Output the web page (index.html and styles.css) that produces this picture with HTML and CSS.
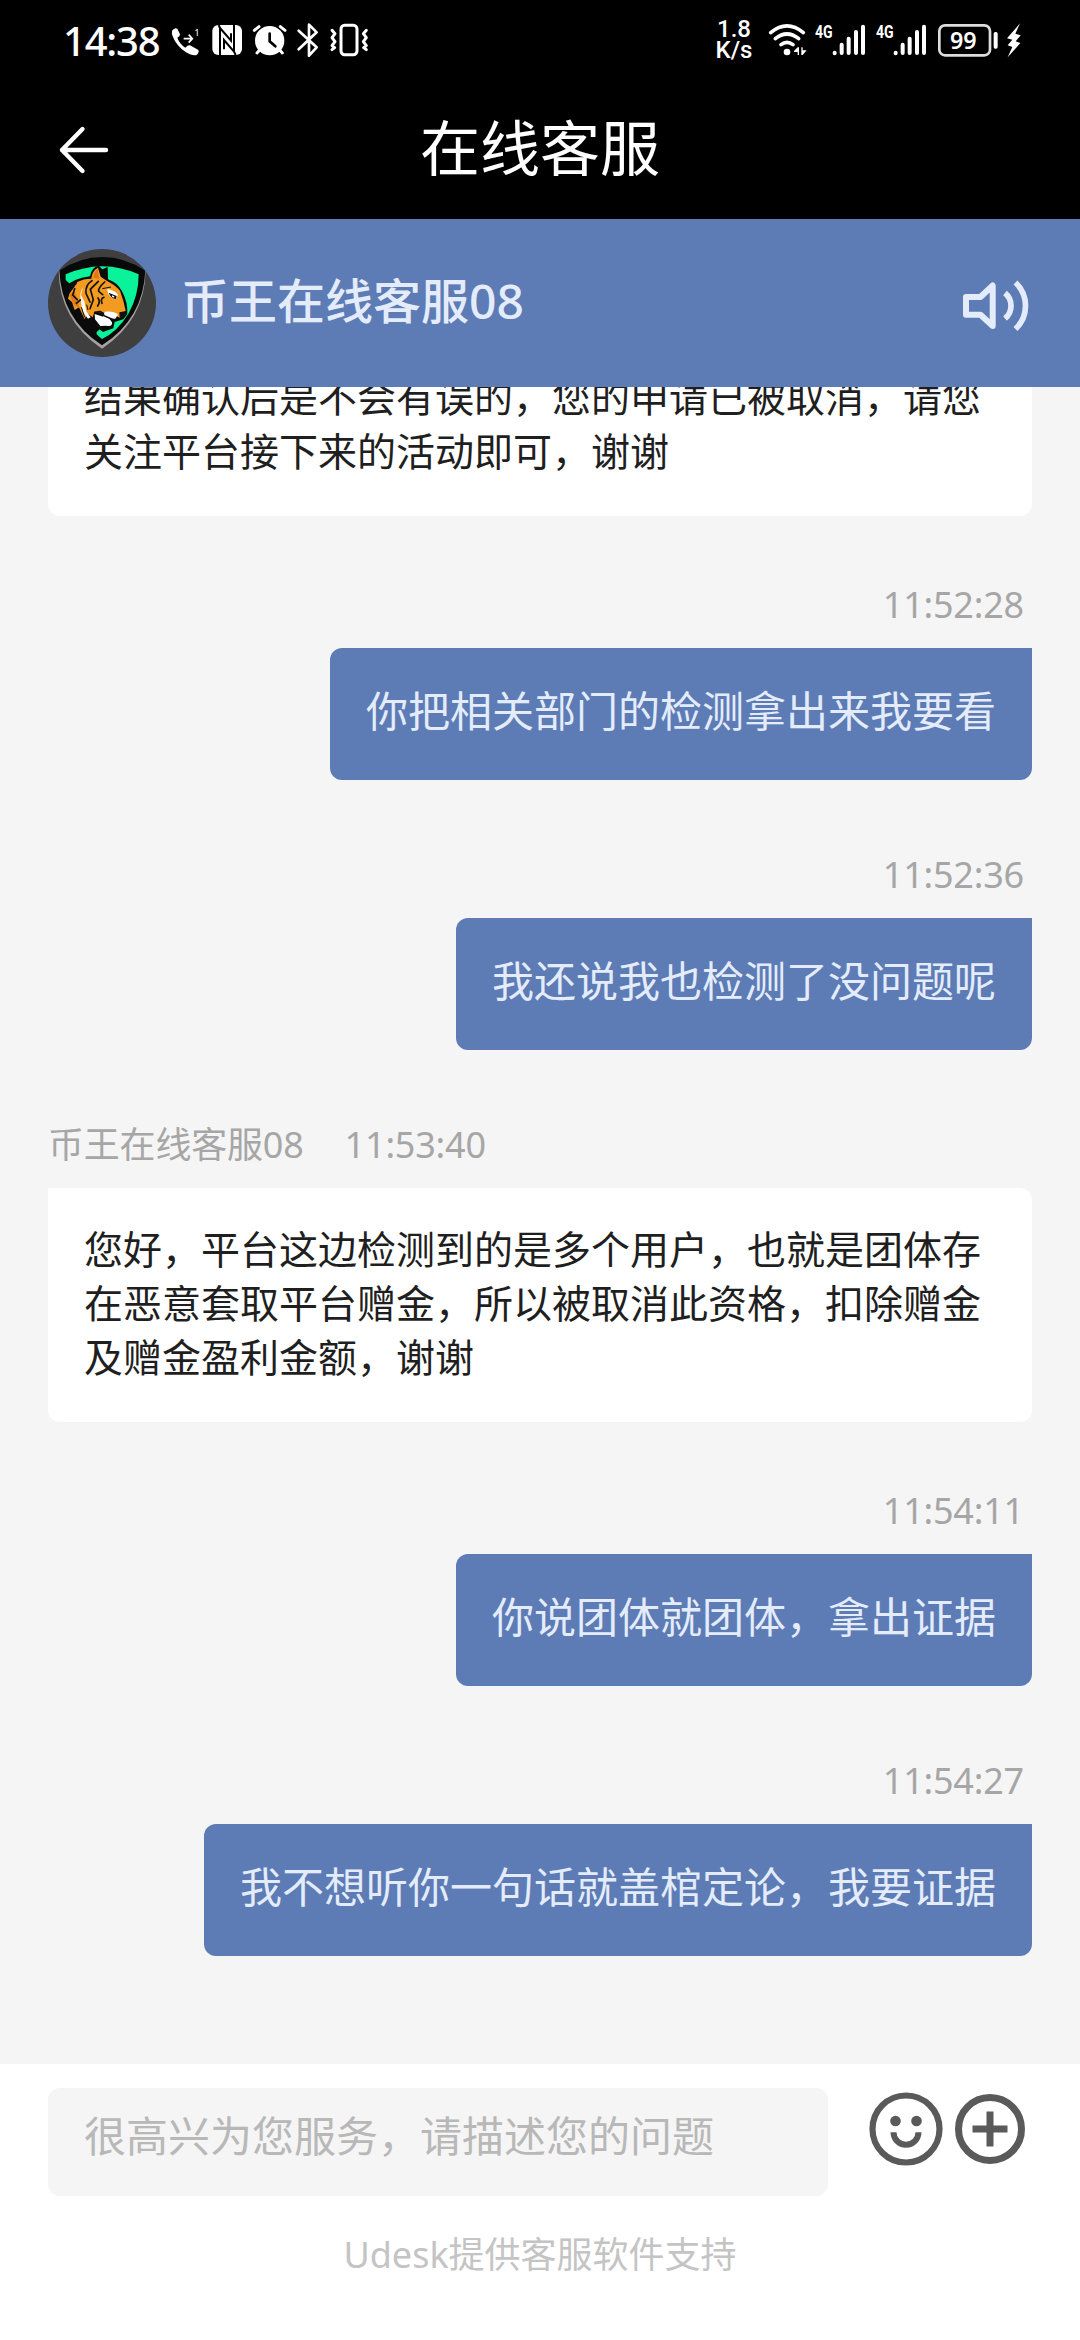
FILE: index.html
```html
<!DOCTYPE html>
<html lang="zh-CN">
<head>
    <meta charset="UTF-8">
    <meta name="viewport" content="width=device-width, initial-scale=1.0">
    <title>在线客服</title>
    <link rel="stylesheet" href="styles.css">
</head>
<body>
    <div class="status-bar">
        <div class="status-left">
            <span class="clock">14:38</span>
            <svg class="icon-call" width="28" height="36" viewBox="393 66 84 108">
                <path fill="#fff" d="M396 92q8-11 16-6l8 17q1 6-8 10q6 18 24 30q8-9 14-7l24 13q6 6-4 16q-12 4-32-8q-28-18-39-46q-5-12-3-19z"/>
                <path fill="none" stroke="#fff" stroke-width="5" d="M431 116h25M446 104l11 12l-11 12"/>
                <text x="463" y="108" font-size="29" fill="#fff">1</text>
            </svg>
            <svg class="icon-nfc" width="30" height="36" viewBox="517 66 90 108">
                <rect x="518" y="75" width="89" height="90" rx="18" fill="#fff"/>
                <path fill="none" stroke="#000" stroke-width="6" d="M541 165V84L574 122V100M583 75V155L553 120V148M541 84l-4-9M583 155l5 10"/>
            </svg>
            <svg class="icon-alarm" width="34" height="36" viewBox="640 66 102 108">
                <circle cx="690" cy="122" r="44" fill="#fff"/>
                <path stroke="#fff" stroke-width="9" stroke-linecap="round" d="M644 91l14-11M736 91l-14-11M662 148l-10 11M718 148l10 11"/>
                <path fill="none" stroke="#000" stroke-width="8" stroke-linecap="round" d="M690 101v23l17 15"/>
            </svg>
            <svg class="icon-bt" width="22" height="36" viewBox="772 66 66 108">
                <path fill="none" stroke="#fff" stroke-width="8" stroke-linejoin="round" stroke-linecap="round" d="M777 92L831 142L808 167V74L831 97L777 148"/>
            </svg>
            <svg class="icon-vib" width="39" height="36" viewBox="870 66 117 108">
                <rect x="903" y="76" width="48" height="88" rx="11" fill="none" stroke="#fff" stroke-width="9"/>
                <path fill="none" stroke="#fff" stroke-width="9" stroke-linejoin="round" stroke-linecap="round" d="M876 91l9 10l-9 12l9 12l-9 12l8 6l-8 6M979 91l-9 10l9 12l-9 12l9 12l-8 6l8 6"/>
            </svg>
        </div>
        <div class="status-right">
            <div class="speed"><span>1.8</span><span>K/s</span></div>
            <svg class="icon-wifi" width="38" height="36" viewBox="237 66 114 108">
                <path fill="none" stroke="#fff" stroke-width="11" stroke-linecap="round" d="M242 98q49-41 98 0M256 116q35-28 70 0M273 134q18-14 36 0"/>
                <circle cx="291" cy="156" r="10" fill="#fff"/>
                <path fill="#fff" d="M312 153l11-11h4v23h-4v-9h-11zM334 142h4v9h12l-12 14h-4z"/>
            </svg>
            <svg class="icon-signal" width="51" height="36" viewBox="373 66 153 108">
                <text x="373" y="114" font-size="54" font-weight="700" fill="#fff" textLength="53" lengthAdjust="spacingAndGlyphs">4G</text>
                <path stroke="#fff" stroke-width="12" stroke-linecap="round" d="M432 158.500v1M453 134v25M474 116v43M496 96v63M517 80v79"/>
            </svg>
            <svg class="icon-signal" width="51" height="36" viewBox="373 66 153 108">
                <text x="373" y="114" font-size="54" font-weight="700" fill="#fff" textLength="53" lengthAdjust="spacingAndGlyphs">4G</text>
                <path stroke="#fff" stroke-width="12" stroke-linecap="round" d="M432 158.500v1M453 134v25M474 116v43M496 96v63M517 80v79"/>
            </svg>
            <svg class="icon-battery" width="60" height="36" viewBox="742 66 180 108">
                <rect x="746" y="76" width="152" height="90" rx="17" fill="none" stroke="#ddd" stroke-width="8"/>
                <rect x="909" y="96" width="12" height="50" rx="5" fill="#fff"/>
                <text x="778" y="147" font-size="68" font-weight="600" fill="#fff" textLength="80" lengthAdjust="spacingAndGlyphs">99</text>
            </svg>
            <svg class="icon-bolt" width="16" height="36" viewBox="947 66 48 108">
                <path fill="#fff" d="M989 70L950 115l16 4l-14 17l14 5l-14 31l38-43l-14-5l15-18l-16-5z"/>
            </svg>
        </div>
    </div>

    <div class="title-bar">
        <svg class="back" width="52" height="50" viewBox="0 0 52 50">
            <path fill="none" stroke="#fff" stroke-width="4.400" stroke-linecap="round" stroke-linejoin="round" d="M24.500 4L4 25L24.500 46M4 25H48"/>
        </svg>
        <h1>在线客服</h1>
    </div>

    <div class="agent-bar">
        <svg class="avatar" width="108" height="108" viewBox="54 57 324 324">
            <circle cx="216" cy="219" r="162" fill="#3f3f40"/>
            <!-- shield -->
            <path fill="#a9a0a3" d="M86 122Q88 270 216 356Q344 270 347 122Z"/>
            <path fill="#080a0a" d="M88 122Q150 81 217 81Q284 81 346 122Q340 266 216 346Q94 266 88 122Z"/>
            <path fill="#0af29a" d="M107 150V133Q160 110 217 109Q275 110 326 133Q326 196 296 250Q262 306 216 327Q204 318 197 309L240 270Z"/>
            <!-- tiger head -->
            <path fill="#0b0b0b" d="M108 170Q128 146 180 139Q184 112 206 107L217 118L233 111L234 148Q262 157 276 184Q294 218 292 252L280 268L254 276L250 295L219 306L200 290L199 326Q150 290 118 234Z"/>
            <path fill="#f39a20" d="M118 192L142 156Q160 146 184 146Q186 122 204 113L212 140L230 152Q252 162 270 182Q282 214 287 242L270 264Q240 244 214 248L194 244L188 262L172 250L164 268L147 232L134 240L126 216L114 206Z"/>
            <path fill="#e0761f" d="M190 144Q192 124 203 118L207 146ZM118 196l16-14l14 52l-14-8z"/>
            <path fill="#fff" d="M159 172L153 196L163 214L169 244L182 262L174 266Q154 246 153 214Q147 190 159 172ZM231 177Q254 180 264 194L259 206Q244 208 235 192ZM224 245Q252 242 264 254L256 266L238 266L246 277Q248 292 228 287L211 288L195 268L194 252L219 260Z"/>
            <path fill="#111" d="M236 188l24 10l-2 9q-16-1-22-19zM268 247l20-4l-4 15l-15 6z"/>
            <path fill="#fff" d="M246 196l7 3l-1 4l-6-3z"/>
            <path fill="none" stroke="#111" stroke-width="5" stroke-linecap="round" d="M186 152Q165 166 168 190L180 216M205 154L181 178L190 209L180 236M224 156Q204 174 206 184L218 194M222 202Q210 206 216 220M203 228Q212 214 204 204M134 176L128 195L142 209M151 210L139 220M194 249Q214 237 222 257L250 269M138 160L125 177M204 286L214 299"/>
            <path fill="none" stroke="#111" stroke-width="3" d="M217 176L243 171M170 224L174 240M154 232L164 262"/>
        </svg>
        <span class="agent-name">币王在线客服08</span>
        <svg class="volume" width="72" height="60" viewBox="0 0 72 60">
            <path fill="none" stroke="#e4ecfb" stroke-width="6" stroke-linejoin="round" d="M6 21H20.500L32.700 9.500V50L20.500 38.700H6Z"/>
            <path fill="none" stroke="#e4ecfb" stroke-width="5.700" d="M45 17A16.500 16.500 0 0 1 45 42.500M55.500 6.500A32 32 0 0 1 55.500 53"/>
        </svg>
    </div>

    <div class="chat">
        <div class="message agent">
            <div class="bubble">结果确认后是不会有误的，您的申请已被取消，请您关注平台接下来的活动即可，谢谢</div>
        </div>
        <div class="message user">
            <div class="meta"><span>11:52:28</span></div>
            <div class="bubble">你把相关部门的检测拿出来我要看</div>
        </div>
        <div class="message user">
            <div class="meta"><span>11:52:36</span></div>
            <div class="bubble">我还说我也检测了没问题呢</div>
        </div>
        <div class="message agent">
            <div class="meta"><span>币王在线客服08</span><span>11:53:40</span></div>
            <div class="bubble">您好，平台这边检测到的是多个用户，也就是团体存在恶意套取平台赠金，所以被取消此资格，扣除赠金及赠金盈利金额，谢谢</div>
        </div>
        <div class="message user">
            <div class="meta"><span>11:54:11</span></div>
            <div class="bubble">你说团体就团体，拿出证据</div>
        </div>
        <div class="message user">
            <div class="meta"><span>11:54:27</span></div>
            <div class="bubble">我不想听你一句话就盖棺定论，我要证据</div>
        </div>
    </div>

    <div class="footer">
        <div class="input-row">
            <div class="input">很高兴为您服务，请描述您的问题</div>
            <svg class="emoji" width="74" height="74" viewBox="0 0 74 74">
                <circle cx="37" cy="37" r="33.500" fill="none" stroke="#5a5a5a" stroke-width="6.200"/>
                <circle cx="26.500" cy="29" r="5.300" fill="#5a5a5a"/>
                <circle cx="47.500" cy="29" r="5.300" fill="#5a5a5a"/>
                <path fill="none" stroke="#5a5a5a" stroke-width="6" d="M24.500 40.300A12.500 12.500 0 0 0 49.500 40.300"/>
            </svg>
            <svg class="plus" width="70" height="70" viewBox="0 0 70 70">
                <circle cx="35" cy="35" r="31.500" fill="none" stroke="#5a5a5a" stroke-width="7"/>
                <path stroke="#5a5a5a" stroke-width="7" d="M17.500 35H52.500M35 17.500V52.500"/>
            </svg>
        </div>
        <p class="powered">Udesk提供客服软件支持</p>
    </div>
</body>
</html>
```

FILE: styles.css
```css
* {
    box-sizing: border-box;
}

body {
    margin: 0;
    width: 1080px;
    height: 2340px;
    display: flex;
    flex-direction: column;
    overflow: hidden;
    background-color: #fff;
    font-family: "Noto Sans", "Noto Sans CJK SC", sans-serif;
}

svg {
    display: block;
    flex: none;
    overflow: visible;
}

/* system status bar */
.status-bar {
    display: flex;
    justify-content: space-between;
    height: 80px;
    padding: 0 58px 0 63px;
    background-color: #000;
    color: #fff;
}

.status-left,
.status-right {
    display: flex;
    align-items: center;
    height: 80px;
}

.clock {
    width: 108px;
    padding-top: 2px;
    font-size: 40px;
    font-weight: 500;
    line-height: 80px;
    letter-spacing: -1.2px;
}

.icon-nfc { margin-left: 13px; }
.icon-alarm { margin-left: 11px; }
.icon-bt { margin-left: 10px; }
.icon-vib { margin-left: 11px; }

.speed {
    display: flex;
    flex-direction: column;
    align-items: center;
    width: 34px;
    font-family: Roboto, sans-serif;
    font-size: 24px;
    font-weight: 500;
    line-height: 21px;
    white-space: nowrap;
}

.icon-wifi { margin-left: 18px; }
.icon-signal { margin-left: 8px; }
.icon-signal + .icon-signal { margin-left: 10px; }
.icon-battery { margin-left: 11px; }
.icon-bolt { margin-left: 8px; }

.icon-signal text {
    font-family: Roboto, sans-serif;
}

/* page title */
.title-bar {
    display: flex;
    align-items: center;
    height: 139px;
    padding: 0 56px 0 58px;
    background-color: #000;
    color: #fff;
}

.title-bar h1 {
    flex: 1;
    margin: 0 54px 3px 0;
    font-size: 60px;
    font-weight: 400;
    line-height: 80px;
    text-align: center;
}

/* agent header */
.agent-bar {
    display: flex;
    align-items: center;
    height: 168px;
    padding: 0 48px;
    background-color: #5d7cb5;
    color: #e4ecfb;
}

.agent-name {
    flex: 1;
    margin: 0 0 4px 25px;
    font-size: 48px;
    font-weight: 500;
    line-height: 60px;
}

.volume {
    margin-top: 6px;
}

/* messages */
.chat {
    display: flex;
    flex-direction: column;
    justify-content: flex-end;
    height: 1677px;
    padding: 0 48px 108px;
    overflow: hidden;
    background-color: #f5f5f5;
}

.message {
    display: flex;
    flex-direction: column;
    flex: none;
}

.message.user {
    align-items: flex-end;
    margin-bottom: 70px;
}

.message.agent {
    align-items: stretch;
    margin-bottom: 64px;
}

.message:last-child {
    margin-bottom: 0;
}

.meta {
    display: flex;
    gap: 41px;
    margin-bottom: 18px;
    font-size: 36px;
    line-height: 50px;
    letter-spacing: -0.2px;
    color: #a6a6a6;
}

.user .meta {
    padding-right: 8px;
}

.bubble {
    padding: 34px 36px 38px;
    border-radius: 12px;
}

.user .bubble {
    padding: 33px 36px 39px;
    border-top-right-radius: 0;
    background-color: #5d7cb5;
    color: #e4ecfb;
    font-size: 42px;
    line-height: 60px;
}

.agent .bubble {
    border-top-left-radius: 0;
    background-color: #fff;
    color: #1f1f1f;
    font-size: 39px;
    line-height: 54px;
}

/* input area */
.footer {
    height: 276px;
    padding: 24px 55px 0 48px;
    background-color: #fff;
}

.input-row {
    display: flex;
    height: 108px;
}

.input {
    width: 780px;
    padding: 18px 36px;
    border-radius: 12px;
    background-color: #f5f5f5;
    color: #b8b8b8;
    font-size: 42px;
    line-height: 60px;
}

.emoji {
    margin: 4px 0 0 41px;
}

.plus {
    margin: 6px 0 0 12px;
}

.powered {
    margin: 34px 0 0;
    padding-left: 7px;
    text-align: center;
    color: #c4c4c4;
    font-size: 36px;
    line-height: 50px;
}
```
